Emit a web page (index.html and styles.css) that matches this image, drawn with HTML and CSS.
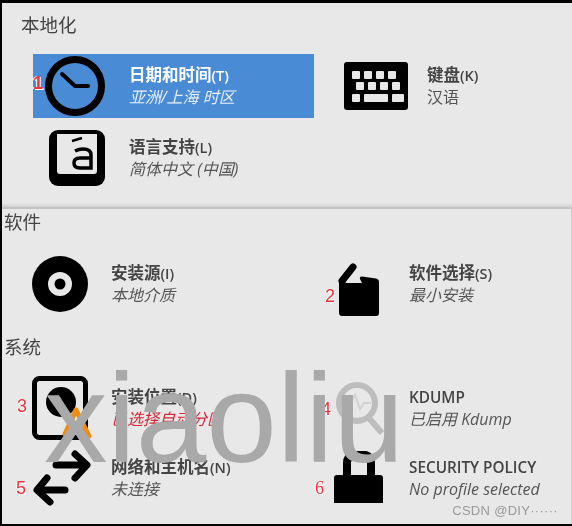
FILE: index.html
```html
<!DOCTYPE html>
<html lang="zh-CN">
<head>
<meta charset="UTF-8" />
<title>安装信息摘要</title>
<link rel="stylesheet" href="styles.css">
</head>
<body>

<div class="screen">
  <section class="panel panel-top">
    <h2 class="panel-title title-local">本地化</h2>
    <div class="local-grid">
      <div class="spoke spoke-selected">
        <div class="icon-local">
          <svg width="60" height="60" viewBox="0 0 60 60"><circle cx="30" cy="30" r="26.5" fill="none" stroke="#000" stroke-width="7"/><path d="M17 18 L30 30 H43" fill="none" stroke="#000" stroke-width="4" stroke-linecap="round" stroke-linejoin="round"/></svg>
        </div>
        <div>
          <div class="spoke-name">日期和时间<span class="key">(T)</span></div>
          <div class="spoke-status">亚洲/上海 时区</div>
        </div>
      </div>
      <div class="spoke spoke-right">
        <div class="icon-keyboard">
          <svg width="64" height="48" viewBox="0 0 64 48"><rect width="64" height="48" rx="3" fill="#000"/><g fill="#e8e8e8"><rect x="8" y="9" width="8" height="8" rx="1"/><rect x="20" y="9" width="8" height="8" rx="1"/><rect x="32" y="9" width="8" height="8" rx="1"/><rect x="44" y="9" width="8" height="8" rx="1"/><rect x="12" y="20" width="8" height="8" rx="1"/><rect x="24" y="20" width="8" height="8" rx="1"/><rect x="36" y="20" width="8" height="8" rx="1"/><rect x="48" y="20" width="8" height="8" rx="1"/><rect x="8" y="32" width="8" height="8" rx="1"/><rect x="20" y="32" width="24" height="8" rx="1"/><rect x="48" y="32" width="12" height="8" rx="1"/></g></svg>
        </div>
        <div>
          <div class="spoke-name">键盘<span class="key">(K)</span></div>
          <div class="spoke-status status-plain">汉语</div>
        </div>
      </div>
      <div class="spoke">
        <div class="icon-local">
          <svg class="icon-lang" width="56" height="56" viewBox="0 0 56 56"><rect width="56" height="56" rx="9" fill="#000"/><path d="M8 4 H48 V41 Q48 44 45 44 H11 Q8 44 8 41 Z" fill="#e8e8e8"/><path d="M23 11 L33 8" stroke="#000" stroke-width="2.5" fill="none"/><path d="M26 21 Q30 19 34 19 Q42 19 42 25 V38 H31 Q25 38 25 33 Q25 28 31 28 H42" fill="none" stroke="#000" stroke-width="3.5"/></svg>
        </div>
        <div>
          <div class="spoke-name">语言支持<span class="key">(L)</span></div>
          <div class="spoke-status">简体中文 (中国)</div>
        </div>
      </div>
    </div>
  </section>

  <section class="panel panel-bottom">
    <h2 class="panel-title">软件</h2>
    <div class="spoke-grid grid-software">
      <div class="spoke">
        <div class="icon-box">
          <svg width="56" height="56" viewBox="0 0 56 56"><circle cx="28" cy="28" r="28" fill="#000"/><circle cx="28" cy="28" r="12" fill="#e8e8e8"/><circle cx="28" cy="28" r="5.5" fill="#000"/></svg>
        </div>
        <div>
          <div class="spoke-name">安装源<span class="key">(I)</span></div>
          <div class="spoke-status">本地介质</div>
        </div>
      </div>
      <div class="spoke">
        <div class="icon-box icon-box-right">
          <svg class="icon-tall" width="50" height="64" viewBox="0 0 50 64"><path d="M5 29 V61 Q5 64 8 64 H42 Q45 64 45 61 V30 Q45 27 42 26.500 L28 24.500 Q25 24.500 26 27 L28 31 H13 L5 29 Z" fill="#000"/><path d="M8 29 L19 15" stroke="#000" stroke-width="7" stroke-linecap="round"/></svg>
        </div>
        <div>
          <div class="spoke-name">软件选择<span class="key">(S)</span></div>
          <div class="spoke-status">最小安装</div>
        </div>
      </div>
    </div>

    <h2 class="panel-title title-system">系统</h2>
    <div class="spoke-grid grid-system">
      <div class="spoke">
        <div class="icon-box">
          <svg width="60" height="64" viewBox="0 0 60 64"><rect x="2.500" y="2.500" width="51" height="59" rx="5" fill="none" stroke="#000" stroke-width="5"/><circle cx="29" cy="26" r="15" fill="#000"/><path d="M44 34 L33 58 M44 34 L57 60" stroke="#f08c10" stroke-width="5" stroke-linecap="round"/></svg>
        </div>
        <div>
          <div class="spoke-name">安装位置<span class="key">(D)</span></div>
          <div class="spoke-status status-error">已选择自动分区</div>
        </div>
      </div>
      <div class="spoke">
        <div class="icon-box icon-box-right">
          <svg width="50" height="54" viewBox="0 0 50 54"><circle cx="23" cy="22" r="18" fill="none" stroke="#bdbdbd" stroke-width="6"/><path d="M34 36 L48 52" stroke="#bdbdbd" stroke-width="6"/><path d="M9 23 H16 L21 14 L26 28 L30 22 H37" fill="none" stroke="#d2d2d2" stroke-width="2"/></svg>
        </div>
        <div>
          <div class="spoke-name name-latin">KDUMP</div>
          <div class="spoke-status">已启用 Kdump</div>
        </div>
      </div>
      <div class="spoke">
        <div class="icon-box">
          <svg width="60" height="58" viewBox="0 0 60 58"><path d="M24 16 H54 M43 5 L55 16 L43 29 M33 41 H6 M15 29 L5 41 L18 53" fill="none" stroke="#000" stroke-width="7" stroke-linecap="round" stroke-linejoin="round"/></svg>
        </div>
        <div>
          <div class="spoke-name">网络和主机名<span class="key">(N)</span></div>
          <div class="spoke-status">未连接</div>
        </div>
      </div>
      <div class="spoke">
        <div class="icon-box icon-box-right">
          <svg width="50" height="54" viewBox="0 0 50 54"><path d="M13 26 V12 Q13 3 25 3 Q37 3 37 12 V26" fill="none" stroke="#000" stroke-width="8"/><path d="M0 27 Q0 24 3 24 H46 Q49 24 49 27 V52 H0 Z" fill="#000"/></svg>
        </div>
        <div>
          <div class="spoke-name name-latin">SECURITY POLICY</div>
          <div class="spoke-status">No profile selected</div>
        </div>
      </div>
    </div>
  </section>

  <span class="badge badge-1">1</span>
  <span class="badge badge-2">2</span>
  <span class="badge badge-3">3</span>
  <span class="badge badge-4">4</span>
  <span class="badge badge-5">5</span>
  <span class="badge badge-6">6</span>

  <div class="watermark">xiaoliu</div>
  <div class="csdn-mark">CSDN @DIY······</div>
</div>

</body>
</html>
```

FILE: styles.css
```css
* {
  box-sizing: border-box;
}
body {
  margin: 0;
  background: #000;
  font-family: "Open Sans", "Noto Sans CJK SC", sans-serif;
}
.screen {
  position: relative;
  width: 572px;
  height: 526px;
  padding: 3px 0 2px 2px;
  overflow: hidden;
  background: #000;
  filter: blur(0.4px);
}
.panel {
  background: #e8e8e8;
  color: #444;
}
.panel-top {
  height: 204px;
  padding-top: 9px;
  background: linear-gradient(to bottom, #e8e8e8 98%, #d0d0d0);
}
.panel-bottom {
  height: 317px;
  border-top: 2px solid #c4c4c4;
  border-right: 1px solid #cfcfcf;
}
.panel-title {
  margin: 0;
  padding-left: 2px;
  height: 26px;
  font-size: 18.5px;
  line-height: 26px;
  font-weight: normal;
}
.title-local {
  padding-left: 19px;
}
.title-system {
  margin-top: 22px;
}
.local-grid {
  display: grid;
  grid-template-columns: 281px 1fr;
  grid-auto-rows: 64px;
  row-gap: 8px;
  margin: 16px 0 0 31px;
}
.spoke-grid {
  display: grid;
  grid-template-columns: 296px 1fr;
}
.grid-software {
  margin-top: 21px;
  grid-auto-rows: 56px;
}
.grid-system {
  margin-top: 16px;
  grid-auto-rows: 64px;
  row-gap: 6px;
}
.spoke {
  display: flex;
  align-items: center;
}
.spoke-selected {
  background: #4a8bd6;
  color: #fff;
}
.spoke-right {
  padding-left: 30px;
}
.icon-local {
  width: 96px;
  padding-left: 12px;
  flex: none;
  line-height: 0;
}
.icon-lang {
  margin-left: 4px;
}
.icon-keyboard {
  width: 83px;
  flex: none;
  line-height: 0;
}
.icon-box {
  width: 109px;
  padding-left: 30px;
  flex: none;
  line-height: 0;
}
.icon-box-right {
  width: 111px;
  padding-left: 36px;
}
.spoke-name {
  font-size: 16.5px;
  line-height: 21px;
  font-weight: 600;
}
.name-latin {
  font-size: 15.3px;
}
.key {
  font-size: 14.500px;
  font-weight: 600;
}
.spoke-status {
  font-size: 16px;
  line-height: 22px;
  font-style: italic;
  color: #555;
}
.spoke-selected .spoke-status {
  color: #e6effa;
}
.status-plain {
  font-style: normal;
}
.spoke-status.status-error {
  color: #d9263a;
}
.badge {
  position: absolute;
  color: #e8343f;
  font-size: 18px;
  line-height: 20px;
  font-family: "Liberation Sans", sans-serif;
  text-shadow: 1px 1px 0 #fff, -1px 0 0 #fff;
}
.badge-1 { left: 33px; top: 73px; font-weight: bold; }
.badge-2 { left: 325px; top: 286px; }
.badge-3 { left: 17px; top: 396px; }
.badge-4 { left: 321px; top: 399px; }
.badge-5 { left: 16px; top: 478px; }
.badge-6 { left: 315px; top: 478px; font-family: "Liberation Serif", serif; }
.watermark {
  position: absolute;
  left: 44px;
  top: 346px;
  font-family: "Liberation Sans", sans-serif;
  font-size: 127px;
  line-height: 144px;
  color: #a9a9a9;
}
.csdn-mark {
  position: absolute;
  right: 14px;
  top: 503px;
  font-family: "Liberation Sans", sans-serif;
  font-size: 13px;
  line-height: 16px;
  letter-spacing: 0.3px;
  color: #999;
}
```
